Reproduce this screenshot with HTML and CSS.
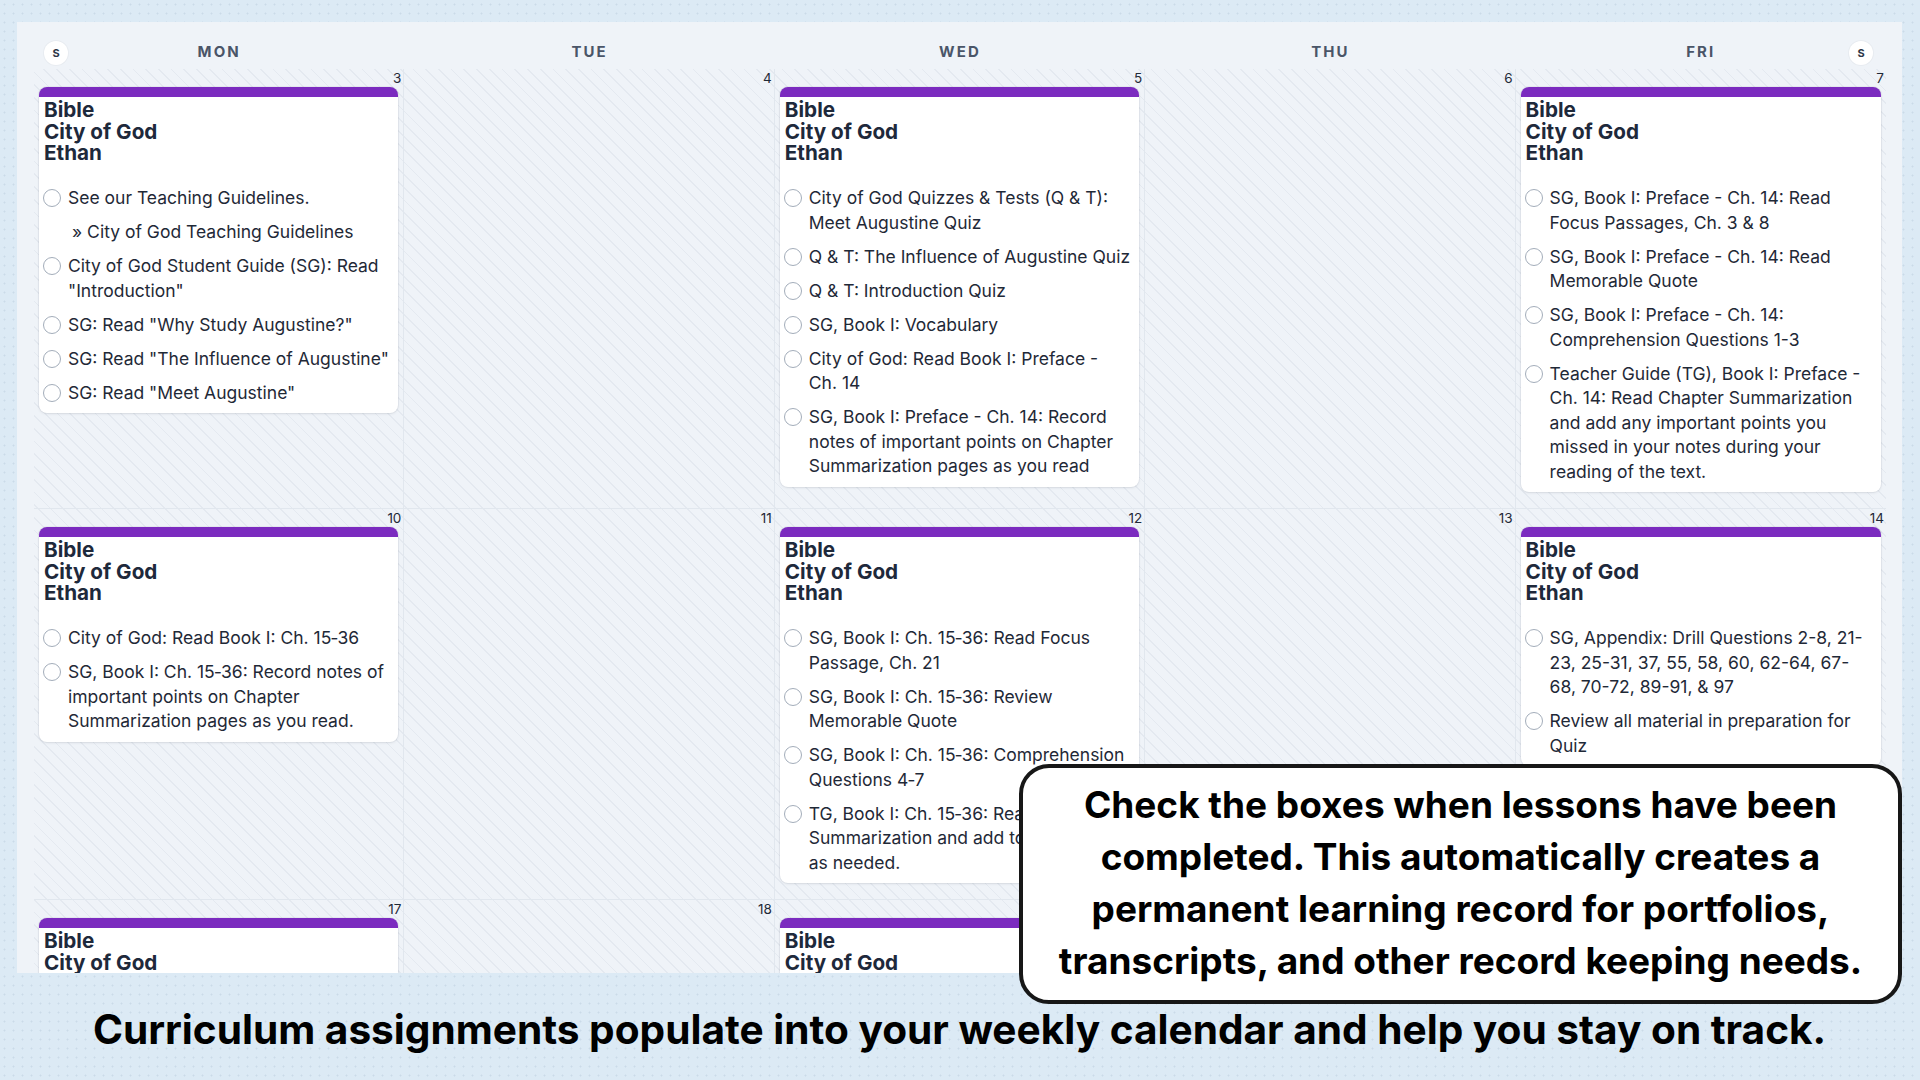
FILE: index.html
```html
<!DOCTYPE html>
<html lang="en">
<head>
<meta charset="utf-8">
<title>Weekly Planner</title>
<link rel="stylesheet" href="styles.css">
</head>
<body>
<div class="stage">
  <section class="planner">
    <header class="week-head">
      <div class="day-name">MON<span class="weekend-toggle left">S</span></div>
      <div class="day-name">TUE</div>
      <div class="day-name">WED</div>
      <div class="day-name">THU</div>
      <div class="day-name">FRI<span class="weekend-toggle right">S</span></div>
    </header>

    <div class="week-grid">
      <!-- week 1 -->
      <div class="day">
        <div class="date">3</div>
        <article class="lesson">
          <h3 class="lesson-title">Bible<br>City of God<br>Ethan</h3>
          <ul class="tasks">
            <li class="task"><span class="check"></span><span>See our Teaching Guidelines.</span></li>
            <li class="task sub">» City of God Teaching Guidelines</li>
            <li class="task"><span class="check"></span><span>City of God Student Guide (SG): Read "Introduction"</span></li>
            <li class="task"><span class="check"></span><span>SG: Read "Why Study Augustine?"</span></li>
            <li class="task"><span class="check"></span><span>SG: Read "The Influence of Augustine"</span></li>
            <li class="task"><span class="check"></span><span>SG: Read "Meet Augustine"</span></li>
          </ul>
        </article>
      </div>
      <div class="day"><div class="date">4</div></div>
      <div class="day">
        <div class="date">5</div>
        <article class="lesson">
          <h3 class="lesson-title">Bible<br>City of God<br>Ethan</h3>
          <ul class="tasks">
            <li class="task"><span class="check"></span><span>City of God Quizzes &amp; Tests (Q &amp; T): Meet Augustine Quiz</span></li>
            <li class="task"><span class="check"></span><span>Q &amp; T: The Influence of Augustine Quiz</span></li>
            <li class="task"><span class="check"></span><span>Q &amp; T: Introduction Quiz</span></li>
            <li class="task"><span class="check"></span><span>SG, Book I: Vocabulary</span></li>
            <li class="task"><span class="check"></span><span>City of God: Read Book I: Preface - Ch.&nbsp;14</span></li>
            <li class="task"><span class="check"></span><span>SG, Book I: Preface - Ch. 14: Record notes of important points on Chapter Summarization pages as you read</span></li>
          </ul>
        </article>
      </div>
      <div class="day"><div class="date">6</div></div>
      <div class="day">
        <div class="date">7</div>
        <article class="lesson">
          <h3 class="lesson-title">Bible<br>City of God<br>Ethan</h3>
          <ul class="tasks">
            <li class="task"><span class="check"></span><span>SG, Book I: Preface - Ch. 14: Read Focus Passages, Ch. 3 &amp; 8</span></li>
            <li class="task"><span class="check"></span><span>SG, Book I: Preface - Ch. 14: Read Memorable Quote</span></li>
            <li class="task"><span class="check"></span><span>SG, Book I: Preface - Ch. 14: Comprehension Questions 1-3</span></li>
            <li class="task"><span class="check"></span><span>Teacher Guide (TG), Book I: Preface - Ch. 14: Read Chapter Summarization and add any important points you missed in your notes during your reading of the text.</span></li>
          </ul>
        </article>
      </div>

      <!-- week 2 -->
      <div class="day">
        <div class="date">10</div>
        <article class="lesson">
          <h3 class="lesson-title">Bible<br>City of God<br>Ethan</h3>
          <ul class="tasks">
            <li class="task"><span class="check"></span><span>City of God: Read Book I: Ch. 15&#8209;36</span></li>
            <li class="task"><span class="check"></span><span>SG, Book I: Ch. 15&#8209;36: Record notes of important points on Chapter Summarization pages as you read.</span></li>
          </ul>
        </article>
      </div>
      <div class="day"><div class="date">11</div></div>
      <div class="day">
        <div class="date">12</div>
        <article class="lesson">
          <h3 class="lesson-title">Bible<br>City of God<br>Ethan</h3>
          <ul class="tasks">
            <li class="task"><span class="check"></span><span>SG, Book I: Ch. 15&#8209;36: Read Focus Passage, Ch. 21</span></li>
            <li class="task"><span class="check"></span><span>SG, Book I: Ch. 15&#8209;36: Review Memorable Quote</span></li>
            <li class="task"><span class="check"></span><span>SG, Book I: Ch. 15&#8209;36: Comprehension Questions 4&#8209;7</span></li>
            <li class="task"><span class="check"></span><span>TG, Book I: Ch. 15&#8209;36: Read Chapter Summarization and add to your notes as needed.</span></li>
          </ul>
        </article>
      </div>
      <div class="day"><div class="date">13</div></div>
      <div class="day">
        <div class="date">14</div>
        <article class="lesson">
          <h3 class="lesson-title">Bible<br>City of God<br>Ethan</h3>
          <ul class="tasks">
            <li class="task"><span class="check"></span><span>SG, Appendix: Drill Questions 2-8, 21-23, 25-31, 37, 55, 58, 60, 62-64, 67-68, 70-72, 89-91, &amp; 97</span></li>
            <li class="task"><span class="check"></span><span>Review all material in preparation for Quiz</span></li>
          </ul>
        </article>
      </div>

      <!-- week 3 -->
      <div class="day">
        <div class="date">17</div>
        <article class="lesson">
          <h3 class="lesson-title">Bible<br>City of God<br>Ethan</h3>
          <ul class="tasks">
            <li class="task"><span class="check"></span><span>City of God: Read Book II: Ch. 1&#8209;15</span></li>
          </ul>
        </article>
      </div>
      <div class="day"><div class="date">18</div></div>
      <div class="day">
        <div class="date">19</div>
        <article class="lesson">
          <h3 class="lesson-title">Bible<br>City of God<br>Ethan</h3>
          <ul class="tasks">
            <li class="task"><span class="check"></span><span>SG, Book II: Vocabulary</span></li>
          </ul>
        </article>
      </div>
      <div class="day"><div class="date">20</div></div>
      <div class="day">
        <div class="date">21</div>
        <article class="lesson">
          <h3 class="lesson-title">Bible<br>City of God<br>Ethan</h3>
          <ul class="tasks">
            <li class="task"><span class="check"></span><span>SG, Book II: Comprehension Questions 1&#8209;4</span></li>
          </ul>
        </article>
      </div>
    </div>
  </section>

  <aside class="callout">Check the boxes when lessons have been<br>completed. This automatically creates a<br>permanent learning record for portfolios,<br>transcripts, and other record keeping needs.</aside>

  <p class="caption">Curriculum assignments populate into your weekly calendar and help you stay on track.</p>
</div>
</body>
</html>
```

FILE: styles.css
```css
* {
  box-sizing: border-box;
}

html,
body {
  margin: 0;
  padding: 0;
}

body {
  width: 1920px;
  height: 1080px;
  overflow: hidden;
  background-color: #dceaf5;
  background-image: radial-gradient(rgba(140, 165, 190, 0.22) 0.7px, transparent 1.3px);
  background-size: 9px 9px;
  font-family: Inter, "Noto Sans", "Liberation Sans", sans-serif;
  color: #1e293b;
}

.stage {
  position: relative;
  padding: 22px 18px 0 17px;
}

/* calendar panel */
.planner {
  height: 951px;
  overflow: hidden;
  background: #eff3f8;
  padding: 0 16px 0 17px;
}

.week-head {
  display: grid;
  grid-template-columns: repeat(5, 1fr);
  height: 47px;
}

.day-name {
  position: relative;
  text-align: center;
  padding-top: 22px;
  font-size: 15px;
  line-height: 16px;
  font-weight: 700;
  letter-spacing: 0.14em;
  color: #4a5568;
}

.weekend-toggle {
  position: absolute;
  top: 19px;
  width: 24px;
  height: 24px;
  border-radius: 50%;
  background: #fff;
  box-shadow: 0 0 0 1px rgba(0, 0, 0, 0.03);
  font-size: 11px;
  line-height: 24px;
  letter-spacing: 0;
  text-align: center;
  color: #2d3748;
}

.weekend-toggle.left {
  left: 10px;
}

.weekend-toggle.right {
  right: 13px;
}

.week-grid {
  display: grid;
  grid-template-columns: repeat(5, 1fr);
  background-color: #eff3f8;
  background-image: repeating-linear-gradient(45deg, #e4e9f0 0 1.2px, transparent 1.2px 9px);
}

.day {
  padding: 0 5px 16px;
  border-right: 1px solid #e1e7ee;
  border-bottom: 1px solid #e1e7ee;
}

.day:nth-child(5n) {
  border-right: none;
}

.date {
  height: 18px;
  margin-right: -3px;
  padding-top: 1px;
  text-align: right;
  font-size: 13.5px;
  line-height: 16px;
  color: #1f2937;
}

/* lesson card */
.lesson {
  background: #fff;
  border-top: 10px solid #7b2bbf;
  border-radius: 8px;
  box-shadow: 0 0 0 1px rgba(15, 23, 42, 0.04), 0 1px 3px rgba(15, 23, 42, 0.08);
  padding: 2px 8px 8px 4px;
}

.lesson-title {
  margin: 0;
  padding-left: 1px;
  font-size: 20.7px;
  line-height: 21.5px;
  font-weight: 700;
  color: #1e293b;
}

.tasks {
  list-style: none;
  margin: 22.5px 0 0;
  padding: 0;
}

.task {
  display: flex;
  gap: 7px;
  font-size: 17.5px;
  line-height: 24.5px;
  color: #1f2937;
}

.task + .task {
  margin-top: 9.5px;
}

.task.sub {
  padding-left: 29px;
}

.check {
  flex: none;
  width: 18px;
  height: 18px;
  margin-top: 3px;
  border: 1.5px solid #a3adba;
  border-radius: 50%;
  background: #fff;
}

/* overlay note */
.callout {
  position: absolute;
  left: 1019px;
  top: 764px;
  width: 883px;
  height: 240px;
  padding-top: 11px;
  background: #fff;
  border: 4px solid #171717;
  border-radius: 30px;
  text-align: center;
  font-size: 37px;
  line-height: 52px;
  font-weight: 700;
  color: #000;
}

.caption {
  margin: 0;
  height: 107px;
  padding-top: 5px;
  display: flex;
  align-items: center;
  justify-content: center;
  font-size: 40.6px;
  font-weight: 700;
  color: #000;
}
```
